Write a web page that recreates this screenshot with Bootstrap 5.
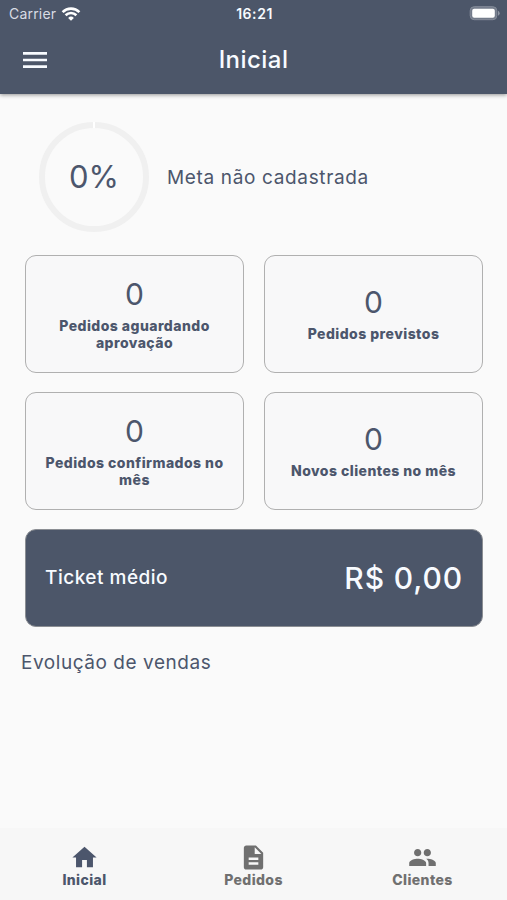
<!DOCTYPE html>
<html lang="pt-BR">
<head>
<meta charset="utf-8">
<meta name="viewport" content="width=device-width, initial-scale=1">
<title>Inicial</title>
<link href="https://cdn.jsdelivr.net/npm/bootstrap@5.3.0/dist/css/bootstrap.min.css" rel="stylesheet">
<style>
body{font-family:Inter,"Liberation Sans",sans-serif;background:#fafafa;color:#4c566c;height:900px;overflow:hidden}
.top-bar{background:#4c5669;color:#f8fbff;height:94px;box-shadow:0 1px 4px rgba(0,0,0,.42)}
.status-row{height:27px;font-size:14px;line-height:27px;padding:0 7px 0 9px}
.carrier{color:#d8dce4;letter-spacing:.2px}
.clock{font-weight:600;font-size:14px;letter-spacing:.55px}
.title-row{height:66px;padding:0 19px}
.page-title{font-size:24px;font-weight:500;line-height:30px;letter-spacing:.45px}
.side{flex:1 1 0}
.goal{padding:27px 0 0 38px;height:161px}
.ring{width:112px;height:112px}
.pct{font-size:31px;line-height:36px;letter-spacing:-.1px}
.goal-text,.sales{font-size:19px;line-height:24px;letter-spacing:.55px;white-space:nowrap;font-weight:400}
.goal-text{margin-left:17px;padding-top:2px;letter-spacing:.65px}
.tiles{padding:0 24px 0 25px;display:grid;grid-template-columns:1fr 1fr;gap:19px 20px}
.tile{height:118px;border:1.5px solid #b0b0b0;border-radius:11px;background:#f8f8f9;text-align:center}
.num{font-size:30px;line-height:36px;margin-top:-1px}
.tile-label{font-size:14px;font-weight:800;line-height:17px;letter-spacing:.45px;white-space:nowrap;margin-top:5px;margin-bottom:1px}
.ticket{margin:19px 24px 0 25px;height:98px;border:1px solid #8b8e93;border-radius:11px;background:#4c5669;color:#f8fbff;padding:0 19px}
.ticket-name{font-size:19px;font-weight:500;letter-spacing:.5px}
.ticket-value{font-size:30px;font-weight:500;letter-spacing:.9px}
.sales{margin:24px 0 0 21px}
.tabs{height:72px;background:#f7f7f7;color:#707070;padding-top:15px}
.tab-item{font-size:14px;font-weight:800;line-height:17px;letter-spacing:.4px;text-decoration:none;color:inherit}
.tab-item svg{margin-bottom:-1px}
.tab-item.current{color:#4c566c}
</style>
<script src="https://cdn.jsdelivr.net/npm/bootstrap@5.3.0/dist/js/bootstrap.bundle.min.js"></script>
</head>
<body class="d-flex flex-column">
<header class="top-bar flex-shrink-0">
  <div class="status-row d-flex align-items-center">
    <div class="side d-flex align-items-center"><span class="carrier">Carrier</span>
      <svg class="ms-1" width="22" height="16" viewBox="0 0 22 16" fill="none" stroke="#fff" stroke-width="2.6"><path d="M2.6 6.1a12 12 0 0 1 16.800 0M5.600 9.200a7.700 7.700 0 0 1 10.800 0"/><path d="M11 14.800l-2.900-2.900a4.100 4.100 0 0 1 5.800 0z" fill="#fff" stroke="none"/></svg></div>
    <span class="clock">16:21</span>
    <div class="side d-flex justify-content-end"><svg width="31" height="16" viewBox="0 0 31 16"><rect x="1.200" y=".7" width="26.600" height="13" rx="4" fill="#737b8a" stroke="#858c9a"/><rect x="3.200" y="2.700" width="22.600" height="9" rx="2" fill="#fff"/><path d="M29 4.700a2.700 2.700 0 0 1 0 5z" fill="#8f96a3"/></svg></div>
  </div>
  <div class="title-row d-flex align-items-center">
    <div class="side"><svg width="32" height="32" viewBox="0 0 24 24" fill="currentColor"><path d="M3 18h18v-2H3v2zm0-5h18v-2H3v2zm0-7v2h18V6H3z"/></svg></div>
    <h1 class="page-title m-0">Inicial</h1><div class="side"></div>
  </div>
</header>
<main class="flex-grow-1">
  <section class="goal d-flex align-items-start">
    <div class="d-flex align-items-center">
      <div class="ring position-relative d-flex align-items-center justify-content-center">
        <svg class="position-absolute top-0 start-0" width="112" height="112" fill="none"><circle cx="56" cy="56" r="52" stroke="#f0f0f0" stroke-width="6"/><path d="M56 1v6" stroke="#fff" stroke-width="2"/></svg>
        <span class="pct position-relative">0%</span>
      </div>
      <span class="goal-text">Meta não cadastrada</span>
    </div>
  </section>
  <section class="tiles">
    <div class="tile d-flex flex-column justify-content-center"><div class="num">0</div><div class="tile-label">Pedidos aguardando<br>aprovação</div></div>
    <div class="tile d-flex flex-column justify-content-center"><div class="num">0</div><div class="tile-label">Pedidos previstos</div></div>
    <div class="tile d-flex flex-column justify-content-center"><div class="num">0</div><div class="tile-label">Pedidos confirmados no<br>mês</div></div>
    <div class="tile d-flex flex-column justify-content-center"><div class="num">0</div><div class="tile-label">Novos clientes no mês</div></div>
  </section>
  <section class="ticket d-flex align-items-center justify-content-between"><span class="ticket-name">Ticket médio</span><span class="ticket-value">R$ 0,00</span></section>
  <h2 class="sales mb-0">Evolução de vendas</h2>
</main>
<nav class="tabs row g-0 flex-shrink-0 text-center">
  <a class="tab-item current col d-flex flex-column align-items-center" href="#"><svg width="29" height="29" viewBox="0 0 24 24" fill="currentColor"><path d="M10 20v-6h4v6h5v-8h3L12 3 2 12h3v8z"/></svg>Inicial</a>
  <a class="tab-item col d-flex flex-column align-items-center" href="#"><svg width="29" height="29" viewBox="0 0 24 24" fill="currentColor"><path d="M14 2H6c-1.100 0-1.990.9-1.990 2L4 20c0 1.100.890 2 1.990 2H18c1.100 0 2-.9 2-2V8l-6-6zm2 16H8v-2h8v2zm0-4H8v-2h8v2zm-3-5V3.500L18.500 9H13z"/></svg>Pedidos</a>
  <a class="tab-item col d-flex flex-column align-items-center" href="#"><svg width="29" height="29" viewBox="0 0 24 24" fill="currentColor"><path d="M16 11c1.660 0 2.990-1.340 2.990-3S17.660 5 16 5s-3 1.340-3 3 1.340 3 3 3zm-8 0c1.660 0 2.990-1.340 2.990-3S9.660 5 8 5 5 6.340 5 8s1.340 3 3 3zm0 2c-2.330 0-7 1.170-7 3.500V19h14v-2.500c0-2.330-4.670-3.500-7-3.500zm8 0c-.29 0-.62.02-.97.05 1.160.84 1.970 1.970 1.970 3.450V19h6v-2.500c0-2.330-4.670-3.500-7-3.500z"/></svg>Clientes</a>
</nav>
</body>
</html>
